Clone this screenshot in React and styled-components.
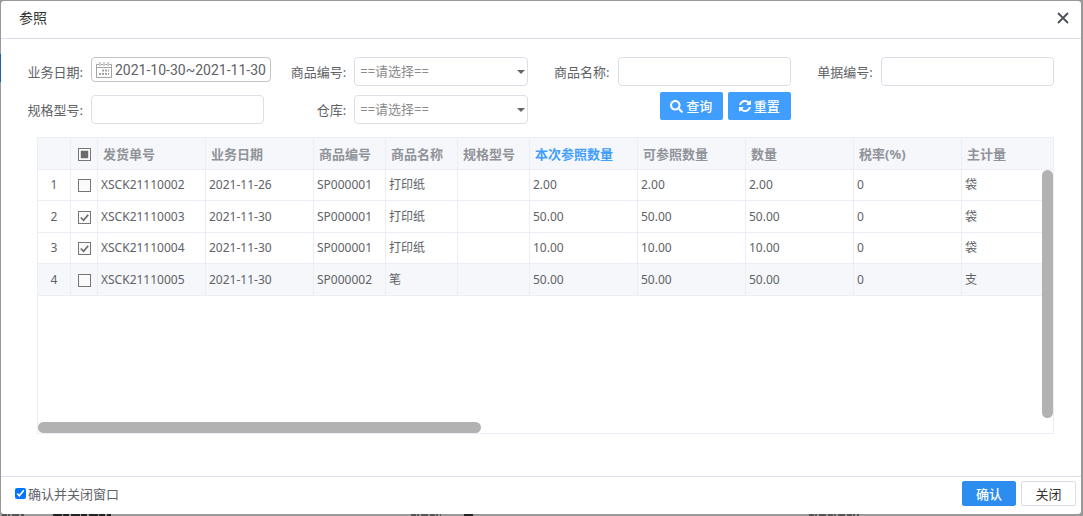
import React, { useState } from "react";
import styled, { createGlobalStyle } from "styled-components";
import { FaSearch } from "react-icons/fa";

const columns = [
	{ key: "no", title: "发货单号", width: 108 },
	{ key: "date", title: "业务日期", width: 108 },
	{ key: "code", title: "商品编号", width: 72 },
	{ key: "name", title: "商品名称", width: 72 },
	{ key: "spec", title: "规格型号", width: 72 },
	{ key: "refQty", title: "本次参照数量", width: 108, active: true },
	{ key: "canQty", title: "可参照数量", width: 108 },
	{ key: "qty", title: "数量", width: 108 },
	{ key: "tax", title: "税率(%)", width: 108 },
	{ key: "unit", title: "主计量", width: 108 },
];

const rows = [
	{ no: "XSCK21110002", date: "2021-11-26", code: "SP000001", name: "打印纸", spec: "", refQty: "2.00", canQty: "2.00", qty: "2.00", tax: "0", unit: "袋" },
	{ no: "XSCK21110003", date: "2021-11-30", code: "SP000001", name: "打印纸", spec: "", refQty: "50.00", canQty: "50.00", qty: "50.00", tax: "0", unit: "袋" },
	{ no: "XSCK21110004", date: "2021-11-30", code: "SP000001", name: "打印纸", spec: "", refQty: "10.00", canQty: "10.00", qty: "10.00", tax: "0", unit: "袋" },
	{ no: "XSCK21110005", date: "2021-11-30", code: "SP000002", name: "笔", spec: "", refQty: "50.00", canQty: "50.00", qty: "50.00", tax: "0", unit: "支" },
];

function TableCheck({ checked, mixed, onChange, label }) {
	return (
		<CheckWrap>
			<CheckInput
				type="checkbox"
				checked={checked}
				onChange={onChange}
				aria-label={label}
			/>
			<CheckMark viewBox="0 0 14 14" aria-hidden="true">
				{mixed && <rect x="3" y="3" width="8" height="8" fill="#6b6b6b" />}
				{!mixed && checked && (
					<path d="M3 7l3 3 5-6" fill="none" stroke="#6b6b6b" strokeWidth="1.8" />
				)}
			</CheckMark>
		</CheckWrap>
	);
}

function App() {
	const [selected, setSelected] = useState([false, true, true, false]);
	const [closeAfter, setCloseAfter] = useState(true);

	const count = selected.filter(Boolean).length;
	const toggle = (index) =>
		setSelected(selected.map((value, i) => (i === index ? !value : value)));
	const toggleAll = () => setSelected(rows.map(() => count !== rows.length));

	return (
		<Backdrop>
			<GlobalStyle />
			<PageEdge />
			<PageTrace viewBox="0 0 1083 2" preserveAspectRatio="none" aria-hidden="true">
				<path d="M2 1h22M411 1h30M809 1h50" stroke="#555" strokeWidth="2" strokeDasharray="5 1 2 2 7 2" />
				<path d="M53 1h58M464 1h9" stroke="#222" strokeWidth="2" strokeDasharray="9 1 6 2" />
			</PageTrace>
			<Dialog role="dialog" aria-labelledby="title">
				<Header>
					<Title id="title">参照</Title>
					<CloseButton aria-label="close">
						<svg width="12" height="12" viewBox="0 0 12 12">
							<path d="M1 1l10 10M11 1L1 11" stroke="#4a4f58" strokeWidth="1.8" />
						</svg>
					</CloseButton>
				</Header>
				<Filters>
					<Field>
						<Label htmlFor="date">业务日期:</Label>
						<DateBox>
							<svg width="16" height="16" viewBox="0 0 16 16" fill="none" stroke="#a3a3a3">
								<path d="M3 2.500H.5v13h15v-13H13M5 2.500h2M9 2.500h2M.5 5.500h15" />
								<path d="M4 0v4M8 0v4M12 0v4" />
								<path d="M6 8.500h2M9 8.500h2M12 8.500h1M3 12h2M6 12h2M9 12h2M12 12h1" strokeWidth="2" />
							</svg>
							<DateInput id="date" defaultValue="2021-10-30~2021-11-30" />
						</DateBox>
					</Field>
					<Field>
						<Label htmlFor="code">商品编号:</Label>
						<SelectBox>
							<Select id="code">
								<option>==请选择==</option>
							</Select>
							<Caret />
						</SelectBox>
					</Field>
					<Field>
						<Label htmlFor="name">商品名称:</Label>
						<TextInput id="name" />
					</Field>
					<Field>
						<Label htmlFor="bill">单据编号:</Label>
						<TextInput id="bill" />
					</Field>
					<Field>
						<Label htmlFor="spec">规格型号:</Label>
						<TextInput id="spec" />
					</Field>
					<Field>
						<Label htmlFor="store">仓库:</Label>
						<SelectBox>
							<Select id="store">
								<option>==请选择==</option>
							</Select>
							<Caret />
						</SelectBox>
					</Field>
					<Actions>
						<ActionButton type="button">
							<FaSearch size={13} />
							查询
						</ActionButton>
						<ActionButton type="button">
							<svg width="12" height="12" viewBox="0 0 1536 1536" fill="currentColor">
								<path d="M1511 928q0 5-1 7-64 268-268 434.500T764 1536q-146 0-282.500-55T238 1324l-129 129q-19 19-45 19t-45-19-19-45V960q0-26 19-45t45-19h448q26 0 45 19t19 45-19 45l-137 137q71 66 161 102t187 36q134 0 250-65t186-179q11-17 53-117 8-23 30-23h192q13 0 22.500 9.500t9.500 22.500zm25-800v448q0 26-19 45t-45 19h-448q-26 0-45-19t-19-45 19-45l138-138Q969 256 768 256q-134 0-250 65T332 500q-11 17-53 117-8 23-30 23H50q-13 0-22.500-9.500T18 608v-7q65-268 270-434.500T768 0q146 0 284 55.500T1297 212l130-129q19-19 45-19t45 19 19 45z" />
							</svg>
							重置
						</ActionButton>
					</Actions>
				</Filters>
				<Grid>
					<Table>
						<colgroup>
							<Col $width={33} />
							<Col $width={27} />
							{columns.map((col) => (
								<Col key={col.key} $width={col.width} />
							))}
						</colgroup>
						<thead>
							<tr>
								<Th />
								<CheckTh>
									<TableCheck
										label="all"
										checked={count === rows.length}
										mixed={count > 0 && count < rows.length}
										onChange={toggleAll}
									/>
								</CheckTh>
								{columns.map((col) => (
									<Th key={col.key} $active={col.active}>
										{col.title}
									</Th>
								))}
							</tr>
						</thead>
						<tbody>
							{rows.map((row, index) => (
								<Row key={row.no} $hover={index === 3}>
									<CenterTd>{index + 1}</CenterTd>
									<CheckTd>
										<TableCheck
											label={row.no}
											checked={selected[index]}
											onChange={() => toggle(index)}
										/>
									</CheckTd>
									{columns.map((col) => (
										<Td key={col.key}>{row[col.key]}</Td>
									))}
								</Row>
							))}
						</tbody>
					</Table>
					<VerticalThumb />
					<HorizontalThumb />
				</Grid>
				<Footer>
					<FooterLabel>
						<FooterCheck
							type="checkbox"
							checked={closeAfter}
							onChange={() => setCloseAfter(!closeAfter)}
						/>
						确认并关闭窗口
					</FooterLabel>
					<FooterButton $primary>确认</FooterButton>
					<FooterButton>关闭</FooterButton>
				</Footer>
			</Dialog>
		</Backdrop>
	);
}
export default App;

const GlobalStyle = createGlobalStyle`
	* {
		box-sizing: border-box;
	}
	body {
		margin: 0;
		color: #606266;
		font-size: 13px;
	}
	body, input, select, button {
		font-family: "Noto Sans", "Noto Sans CJK SC", sans-serif;
	}
`;

const Backdrop = styled.div`
	position: relative;
	display: flex;
	min-height: 100vh;
	padding: 1px 2px 2px 1px;
	background: #999;
`;

/* blue side menu of the page under the mask */
const PageEdge = styled.div`
	position: absolute;
	left: 0;
	top: 54px;
	width: 1px;
	height: 28px;
	background: #1f5fa8;
`;

/* tops of the form row under the mask */
const PageTrace = styled.svg`
	position: absolute;
	bottom: 0;
	left: 0;
	width: 100%;
	height: 2px;
`;

const Dialog = styled.div`
	display: flex;
	flex: 1;
	flex-direction: column;
	min-width: 0;
	border-radius: 3px;
	background: #fff;
`;

const Header = styled.div`
	display: flex;
	align-items: center;
	justify-content: space-between;
	height: 38px;
	padding: 0 12px 3px 18px;
	border-bottom: 1px solid #dcdee8;
`;

const Title = styled.h1`
	margin: 0;
	color: #333;
	font-size: 14px;
	font-weight: 400;
	line-height: 20px;
`;

const CloseButton = styled.button`
	display: flex;
	padding: 0;
	border: 0;
	background: none;
`;

const Filters = styled.form`
	display: grid;
	grid-template-columns: repeat(4, 1fr);
	grid-auto-rows: 38px;
	padding: 15px 27px 0 0;
`;

const Field = styled.div`
	display: flex;
	align-items: flex-start;
	gap: 8px;
	min-width: 0;
	padding-top: 3px;
`;

const Label = styled.label`
	flex: none;
	width: 82px;
	line-height: 30px;
	text-align: right;
`;

const TextInput = styled.input`
	flex: 1;
	min-width: 0;
	height: 29px;
	padding: 0 8px;
	border: 1px solid #dcdfe6;
	border-radius: 4px;
	background: #fff;
`;

const DateBox = styled.div`
	display: flex;
	flex: none;
	align-items: center;
	gap: 3px;
	width: 180px;
	height: 25px;
	padding-left: 4px;
	border: 1px solid #c4c4c4;
	border-radius: 4px;
`;

const DateInput = styled.input`
	flex: 1;
	min-width: 0;
	padding: 0;
	border: 0;
	background: none;
	color: #606266;
	font-family: Roboto, sans-serif;
	font-size: 14px;
`;

const SelectBox = styled.div`
	position: relative;
	flex: 1;
`;

const Select = styled.select`
	display: block;
	width: 100%;
	height: 29px;
	padding: 0 5px 2px;
	border: 1px solid #dcdfe6;
	border-radius: 4px;
	appearance: none;
	background: #fff;
	color: #8c8c8c;
	font-size: 13px;
`;

const Caret = styled.span`
	position: absolute;
	top: 13px;
	right: 3px;
	border: 4px solid transparent;
	border-top-color: #666;
	border-bottom: 0;
	pointer-events: none;
`;

const Actions = styled.div`
	display: flex;
	align-items: flex-start;
	justify-content: flex-end;
	gap: 5px;
`;

const ActionButton = styled.button`
	display: flex;
	align-items: center;
	justify-content: center;
	gap: 3px;
	width: 63px;
	height: 28px;
	padding: 0;
	border: 0;
	border-radius: 2px;
	background: #409eff;
	color: #fff;
	font-size: 13px;
	font-weight: 500;
	line-height: 28px;
`;

const Grid = styled.div`
	position: relative;
	height: 297px;
	margin: 7px 27px 0 36px;
	overflow: hidden;
	border: 1px solid #ebeef5;
`;

const Table = styled.table`
	width: 1032px;
	min-width: 100%;
	table-layout: fixed;
	border-collapse: separate;
	border-spacing: 0;
`;

const Col = styled.col`
	width: ${({ $width }) => $width}px;
`;

const Th = styled.th`
	height: 32px;
	padding: 1px 5px 0;
	border-right: 1px solid #ebeef5;
	border-bottom: 1px solid #ebeef5;
	background: #f5f7fa;
	color: ${({ $active }) => ($active ? "#409eff" : "#909399")};
	font-size: 13px;
	line-height: 18px;
	text-align: left;
	white-space: nowrap;
`;

const CheckTh = styled(Th)`
	padding: 2px 5px 0 7px;
`;

const Td = styled.td`
	height: 31px;
	padding: 0 3px;
	border-right: 1px solid #ebeef5;
	border-bottom: 1px solid #ebeef5;
	font-size: 12px;
	line-height: 18px;
	white-space: nowrap;
`;

const CenterTd = styled(Td)`
	text-align: center;
`;

const CheckTd = styled(Td)`
	padding: 1px 5px 0 7px;
`;

const Row = styled.tr`
	background: ${({ $hover }) => ($hover ? "#f5f7fa" : "#fff")};
	&:nth-child(even) > td {
		height: 32px;
	}
`;

const CheckWrap = styled.span`
	position: relative;
	display: block;
	width: 13px;
	height: 13px;
`;

const CheckInput = styled.input`
	display: block;
	width: 13px;
	height: 13px;
	margin: 0;
	border: 1px solid #767676;
	appearance: none;
	background: #fafafa;
`;

const CheckMark = styled.svg`
	position: absolute;
	inset: 0;
	pointer-events: none;
`;

const VerticalThumb = styled.div`
	position: absolute;
	top: 32px;
	right: 0;
	width: 11px;
	height: 248px;
	border-radius: 6px;
	background: #b2b2b2;
`;

const HorizontalThumb = styled.div`
	position: absolute;
	bottom: 0;
	left: 0;
	width: 443px;
	height: 11px;
	border-radius: 6px;
	background: #b2b2b2;
`;

const Footer = styled.div`
	display: flex;
	align-items: flex-start;
	gap: 5px;
	height: 38px;
	margin-top: auto;
	padding: 4px 5px 0 14px;
	border-top: 1px solid #dcdee8;
`;

const FooterLabel = styled.label`
	display: flex;
	align-items: center;
	gap: 2px;
	height: 24px;
	margin-right: auto;
`;

const FooterCheck = styled.input`
	width: 11px;
	height: 11px;
	margin: 0;
`;

const FooterButton = styled.button`
	width: ${({ $primary }) => ($primary ? 54 : 55)}px;
	height: 25px;
	padding: 0;
	border: 1px solid ${({ $primary }) => ($primary ? "#2d8cf0" : "#dcdee8")};
	border-radius: 2px;
	background: ${({ $primary }) => ($primary ? "#2d8cf0" : "#fff")};
	color: ${({ $primary }) => ($primary ? "#fff" : "#333")};
	font-size: 13px;
	font-weight: ${({ $primary }) => ($primary ? 500 : 400)};
	line-height: 22px;
`;
